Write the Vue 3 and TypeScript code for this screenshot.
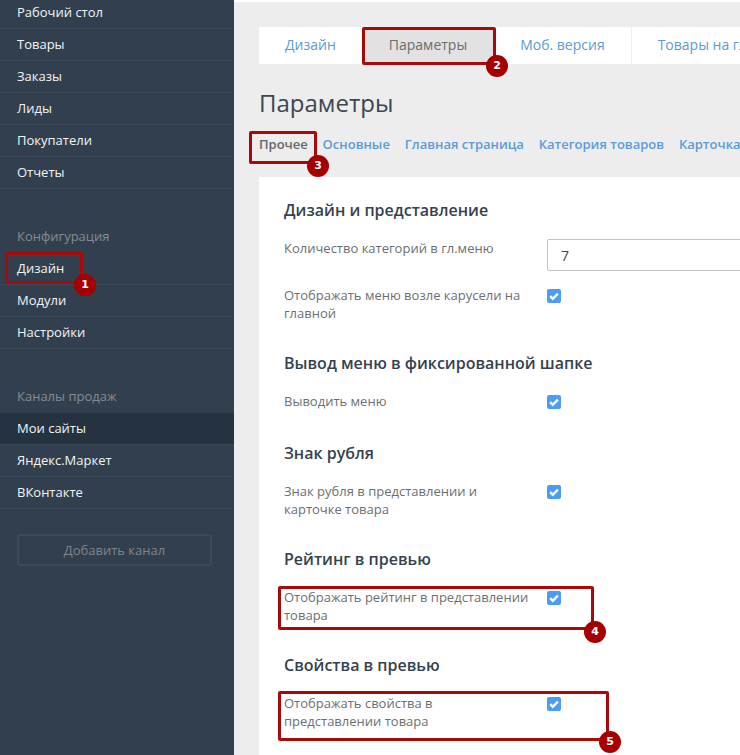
<script setup lang="ts">
interface Row { label: string; check: boolean }
interface Section { title: string; rows: Row[] }
interface Mark { n: number; x: number; y: number; w: number; h: number; bx: number; by: number }

const topNav: string[] = ['Рабочий стол', 'Товары', 'Заказы', 'Лиды', 'Покупатели', 'Отчеты']
const configNav: string[] = ['Дизайн', 'Модули', 'Настройки']
const channelNav: string[] = ['Мои сайты', 'Яндекс.Маркет', 'ВКонтакте']
const tabs: string[] = ['Дизайн', 'Параметры', 'Моб. версия', 'Товары на главной']
const subTabs: string[] = ['Прочее', 'Основные', 'Главная страница', 'Категория товаров', 'Карточка товара']

const sections: Section[] = [
  {
    title: 'Дизайн и представление',
    rows: [
      { label: 'Количество категорий в гл.меню', check: false },
      { label: 'Отображать меню возле карусели на главной', check: true },
    ],
  },
  { title: 'Вывод меню в фиксированной шапке', rows: [{ label: 'Выводить меню', check: true }] },
  { title: 'Знак рубля', rows: [{ label: 'Знак рубля в представлении и карточке товара', check: true }] },
  { title: 'Рейтинг в превью', rows: [{ label: 'Отображать рейтинг в представлении товара', check: true }] },
  { title: 'Свойства в превью', rows: [{ label: 'Отображать свойства в представлении товара', check: true }] },
]

const marks: Mark[] = [
  { n: 1, x: 5, y: 252, w: 78, h: 32, bx: 85, by: 285 },
  { n: 2, x: 362, y: 27, w: 134, h: 38, bx: 497, by: 66 },
  { n: 3, x: 249, y: 131, w: 68, h: 33, bx: 318, by: 166 },
  { n: 4, x: 278, y: 586, w: 316, h: 44, bx: 595, by: 632 },
  { n: 5, x: 278, y: 691, w: 331, h: 50, bx: 610, by: 742 },
]
</script>

<template>
  <div class="page">
    <aside class="sidebar">
      <ul class="nav nav-first">
        <li v-for="item in topNav" :key="item" class="item">{{ item }}</li>
      </ul>
      <div class="group-label">Конфигурация</div>
      <ul class="nav">
        <li v-for="item in configNav" :key="item" class="item">{{ item }}</li>
      </ul>
      <div class="group-label">Каналы продаж</div>
      <ul class="nav">
        <li
          v-for="(item, i) in channelNav"
          :key="item"
          class="item"
          :class="{ active: i === 0 }"
        >{{ item }}</li>
      </ul>
      <div class="add-btn">Добавить канал</div>
    </aside>

    <main class="main">
      <div class="tabs">
        <div
          v-for="(tab, i) in tabs"
          :key="tab"
          class="tab"
          :class="{ current: i === 1 }"
        >{{ tab }}</div>
      </div>
      <h1 class="title">Параметры</h1>
      <div class="subtabs">
        <span
          v-for="(tab, i) in subTabs"
          :key="tab"
          class="subtab"
          :class="{ current: i === 0 }"
        >{{ tab }}</span>
      </div>
      <section class="card">
        <div v-for="section in sections" :key="section.title" class="section">
          <h2 class="heading">{{ section.title }}</h2>
          <div v-for="row in section.rows" :key="row.label" class="row">
            <div class="label">{{ row.label }}</div>
            <span v-if="row.check" class="check">
              <svg width="14" height="14" viewBox="0 0 14 14">
                <path d="M3.2 7.2 5.8 9.8 10.9 4.6" fill="none" stroke="#fff" stroke-width="2.4" />
              </svg>
            </span>
            <div v-else class="field">7</div>
          </div>
        </div>
      </section>
    </main>

    <template v-for="m in marks" :key="m.n">
      <div
        class="mark-box"
        :style="{ left: m.x + 'px', top: m.y + 'px', width: m.w + 'px', height: m.h + 'px' }"
      ></div>
      <div class="mark-badge" :style="{ left: m.bx - 11 + 'px', top: m.by - 11 + 'px' }">{{ m.n }}</div>
    </template>
  </div>
</template>

<style>
html,
body {
  margin: 0;
  overflow: hidden;
}
</style>

<style scoped>
.page {
  position: relative;
  display: flex;
  width: 740px;
  height: 755px;
  overflow: hidden;
  font-family: "Open Sans", "Noto Sans", sans-serif;
  font-size: 13px;
}
.sidebar {
  flex: 0 0 234px;
  background: #323f4e;
  color: #f2f4f5;
}
.nav {
  list-style: none;
  margin: 0;
  padding: 0;
}
.nav-first {
  margin-top: -3px;
}
.item {
  box-sizing: border-box;
  height: 32px;
  padding-left: 17px;
  line-height: 31px;
  border-bottom: 1px solid #3a4859;
}
.item.active {
  background: #253341;
}
.group-label {
  margin-top: 31px;
  height: 33px;
  padding-left: 17px;
  line-height: 32px;
  color: #858b92;
}
.add-btn {
  box-sizing: border-box;
  width: 195px;
  height: 32px;
  margin: 25px 0 0 17px;
  border: 2px solid #3b4959;
  border-radius: 3px;
  line-height: 28px;
  text-align: center;
  color: #7e858d;
}
.main {
  flex: 1;
  min-width: 0;
  overflow: hidden;
  box-sizing: border-box;
  padding: 25px 0 0 25px;
  border-top: 2px solid #fff;
  background: #ededed;
}
.tabs {
  display: flex;
  width: 700px;
  height: 37px;
  background: #fff;
}
.tab {
  flex: none;
  padding: 0 26px;
  border-right: 1px solid #eee;
  font-size: 14px;
  line-height: 36px;
  color: #5b9bd8;
}
.tab.current {
  background: #e2e2e2;
  color: #6c6c6c;
}
.title {
  margin: 23px 0 0;
  font-size: 24px;
  font-weight: 400;
  line-height: 32px;
  color: #3b4654;
}
.subtabs {
  display: flex;
  width: 700px;
  gap: 14.8px;
  margin-top: 16px;
  line-height: 18px;
  font-weight: 600;
}
.subtab {
  flex: none;
  color: #5b9bd8;
}
.subtab.current {
  color: #666;
}
.card {
  width: 700px;
  box-sizing: border-box;
  height: 600px;
  margin-top: 24px;
  padding: 22px 0 0 25px;
  background: #fff;
}
.section {
  margin-bottom: 30px;
}
.heading {
  margin: 0 0 18px;
  font-size: 16px;
  font-weight: 600;
  line-height: 22px;
  color: #36424f;
}
.row {
  display: flex;
  align-items: flex-start;
  min-height: 20px;
}
.row + .row {
  margin-top: 15px;
}
.label {
  flex: 0 0 247px;
  margin-right: 16px;
  line-height: 18px;
  color: #6b6f74;
}
.check {
  display: block;
  width: 14px;
  height: 14px;
  margin-top: 2.5px;
  border-radius: 2px;
  background: #4a9cf5;
}
.check svg {
  display: block;
}
.field {
  box-sizing: border-box;
  width: 300px;
  height: 32px;
  padding-left: 13px;
  border: 1px solid #c4c4c4;
  border-radius: 2px;
  font-size: 14px;
  line-height: 31px;
  color: #444;
}
.mark-box {
  position: absolute;
  box-sizing: border-box;
  border: 3px solid #a80a0a;
  border-radius: 2px;
}
.mark-badge {
  position: absolute;
  width: 22px;
  height: 22px;
  border-radius: 50%;
  background: #a50000;
  color: #fff;
  font-family: "DejaVu Sans", sans-serif;
  font-size: 11px;
  font-weight: 700;
  line-height: 22px;
  text-align: center;
}
</style>
